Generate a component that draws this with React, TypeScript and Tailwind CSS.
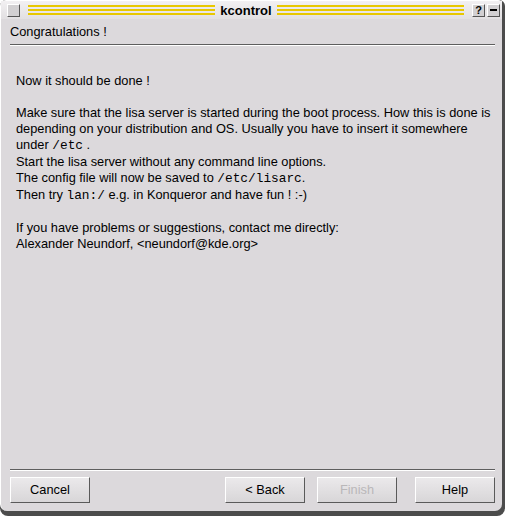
const sans = { fontFamily: '"Liberation Sans", Arial, sans-serif' };

function Stripes() {
  return (
    <div className="flex-1 flex flex-col gap-[2px] justify-center">
      <div className="h-[2px] bg-[#e8c800]" />
      <div className="h-[2px] bg-[#e8c800]" />
      <div className="h-[2px] bg-[#e8c800]" />
    </div>
  );
}

function TitleButton({ children }: { children?: React.ReactNode }) {
  return (
    <div className="w-[13px] h-[13px] border border-t-white border-l-white border-b-[#555] border-r-[#555] bg-[#d2d0d2] flex items-center justify-center text-[11px] font-bold leading-none text-black">
      {children}
    </div>
  );
}

function Button({ label, disabled }: { label: string; disabled?: boolean }) {
  return (
    <button
      className={
        "w-[80px] h-[26px] border border-t-white border-l-white border-b-[#5a5a5a] border-r-[#5a5a5a] bg-gradient-to-b from-[#ebe9eb] to-[#d8d6d8] text-[12.8px] " +
        (disabled ? "text-[#b9b7b9]" : "text-black")
      }
      style={sans}
    >
      {label}
    </button>
  );
}

const mono = "font-['Liberation_Mono',monospace]";

export default function App() {
  return (
    <div className="w-[505px] h-[516px] bg-[#4c4c4c] rounded-t-[6px] rounded-b-[8px]" style={sans}>
      <div className="w-[502px] h-[511px] bg-[#dcd9dc] rounded-tl-[6px] rounded-tr-[4px] rounded-b-[7px] flex flex-col border-l border-t border-white">
        {/* title bar */}
        <div className="h-[18px] flex items-center gap-[8px] pl-[6px] pr-[2px] bg-gradient-to-b from-[#f2f0f2] to-[#e2e0e2]">
          <TitleButton />
          <div className="flex-1 flex items-center gap-[4px]">
            <Stripes />
            <span className="text-[13px] font-bold leading-none text-black px-[1px]">kcontrol</span>
            <Stripes />
          </div>
          <div className="flex gap-[2px]">
            <TitleButton>?</TitleButton>
            <TitleButton>
              <div className="w-[7px] h-[2px] bg-black" />
            </TitleButton>
          </div>
        </div>

        <div className="px-[9px] pt-[5px] text-[12.8px] leading-[16px] text-black">
          Congratulations !
        </div>
        <div className="ml-[9px] mr-[7px] mt-[4px] border-t border-[#5e5e5e] border-b border-b-white" />

        <div className="flex-1 pl-[15px] pt-[27px] text-[12.8px] leading-[16px] text-black">
          <p>Now it should be done !</p>
          <p className="mt-[16px]">
            Make sure that the lisa server is started during the boot process. How this is done is
            <br />
            depending on your distribution and OS. Usually you have to insert it somewhere
            <br />
            under <span className={mono}>/etc</span> .
            <br />
            Start the lisa server without any command line options.
            <br />
            The config file will now be saved to <span className={mono}>/etc/lisarc</span>.
            <br />
            Then try <span className={mono}>lan:/</span> e.g. in Konqueror and have fun ! :-)
          </p>
          <p className="mt-[16px]">
            If you have problems or suggestions, contact me directly:
            <br />
            Alexander Neundorf, &lt;neundorf@kde.org&gt;
          </p>
        </div>

        <div className="ml-[9px] mr-[7px] border-t border-[#5e5e5e] border-b border-b-white" />
        <div className="flex items-center pl-[9px] pr-[7px] pt-[6px] pb-[8px]">
          <Button label="Cancel" />
          <div className="flex-1" />
          <div className="flex gap-[12px]">
            <Button label="< Back" />
            <Button label="Finish" disabled />
          </div>
          <div className="w-[18px]" />
          <Button label="Help" />
        </div>
      </div>
    </div>
  );
}
